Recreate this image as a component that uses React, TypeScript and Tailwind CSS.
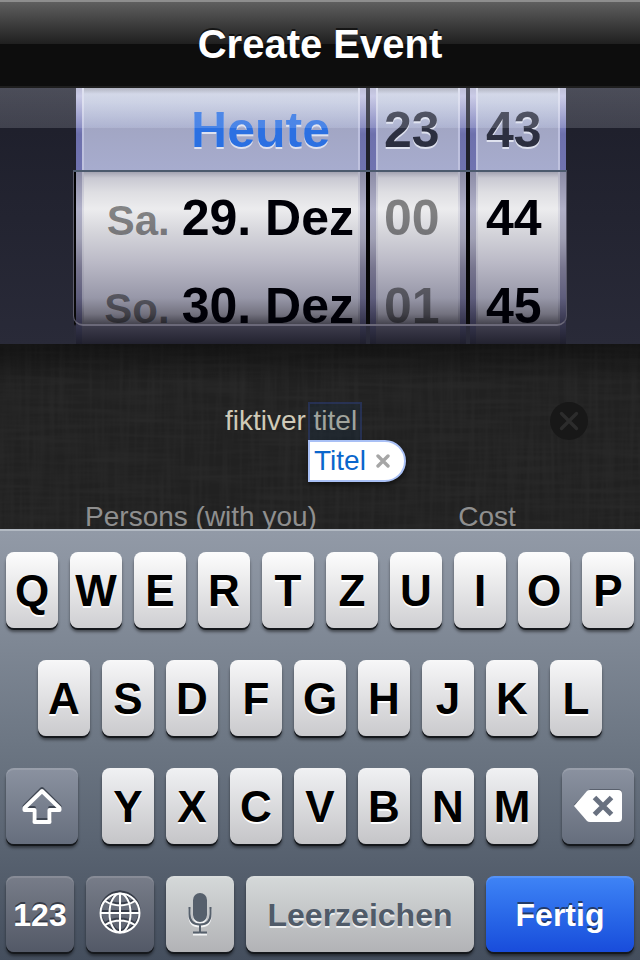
import type { ReactNode } from "react";

type Row = { day?: string; text: string; tone?: string };

function Wheel({ label, rows, className, listClass }: { label: string; rows: Row[]; className: string; listClass: string }) {
  const edge =
    "w-[6px] shrink-0 bg-[linear-gradient(180deg,#b0b0cc_0px,#c0c0e0_8px,#7c7fba_38px,#6d70ac_46px,#7073b0_82px,#8c8ca6_84px,#b0b0c8_121px,#a0a0b4_150px,#77758e_180px,#5e5d7c_210px,#33324a_236px,#33334a_238px,#1f1f2d_256px)]";
  const shine =
    "w-[2px] shrink-0 bg-[linear-gradient(180deg,#d9dbec_0px,#d9dbec_14px,#bdc0de_40px,#bfc2de_82px,#b4b4c4_84px,#dcdce4_121px,#c6c6d0_150px,#aaa9b8_180px,#8f8fa2_210px,#45444f_236px,#3d3c4c_238px,#22222f_256px)]";
  return (
    <div className={"flex h-full " + className}>
      <div className={edge} />
      <div className={shine} />
      <ul
        role="listbox"
        aria-label={label}
        className={
          "flex min-w-0 flex-1 flex-col overflow-hidden bg-[linear-gradient(180deg,#a0a2b0_0px,#cbd0e2_6px,#c4cadf_14px,#a2a8c9_39px,#a2a6c4_40px,#a7acce_82px,#a4a4b2_84px,#c9c9d2_90px,#dedee2_104px,#ececee_121px,#d4d4da_145px,#bab9c6_175px,#9797a8_210px,#73727f_226px,#45444f_236px,#3d3c4c_238px,#22222f_256px)] text-[50px] leading-none font-bold whitespace-nowrap " +
          listClass
        }
      >
        {rows.map((r, i) => (
          <li
            key={r.text}
            role="option"
            aria-selected={i === 0}
            className={
              "flex shrink-0 items-center " +
              (i === 0 ? "h-[86px] pb-[2px] [text-shadow:0_2px_0_#dfe2ef] " : "h-[88px] ") +
              (r.tone ?? "text-[#000007]")
            }
          >
            <span className="flex items-baseline gap-3">
              {r.day && <span className="text-[42px] leading-none text-[#000000]/45">{r.day}</span>}
              <span>{r.text}</span>
            </span>
          </li>
        ))}
      </ul>
      <div className={shine} />
      <div className={edge} />
    </div>
  );
}

const KEY =
  "flex h-[76px] items-center justify-center rounded-lg font-bold leading-none shadow-[inset_0_2px_0_rgba(255,255,255,0.12),0_2px_0_#15181c,0_4px_3px_rgba(0,0,0,0.45)] ";

const DARK_TEXT = "text-white [text-shadow:0_-2px_0_rgba(30,35,45,0.7)] ";

function Key({ label, className, children }: { label?: string; className: string; children: ReactNode }) {
  return (
    <button type="button" aria-label={label} className={KEY + className}>
      {children}
    </button>
  );
}

function Letters({ letters, className }: { letters: string; className: string }) {
  return (
    <>
      {letters.split("").map((l) => (
        <Key
          key={l}
          className={"min-w-0 flex-1 bg-linear-to-b pt-[2px] text-[44px] text-black [text-shadow:0_2px_0_#ffffff] " + className}
        >
          {l}
        </Key>
      ))}
    </>
  );
}

function ShiftIcon() {
  return (
    <svg width="44" height="40" viewBox="0 0 44 40" fill="none" strokeLinejoin="round" aria-hidden="true">
      <path d="M22 3 L39.5 20.5 V22 H30 V34 H14 V22 H4.5 V20.5 Z" stroke="#3f4652" strokeWidth="4" />
      <path d="M22 5 L39.5 22 V24 H29.5 V36 H14.5 V24 H4.5 V22 Z" stroke="#fff" strokeWidth="4" />
    </svg>
  );
}

function BackspaceIcon() {
  return (
    <svg width="50" height="36" viewBox="0 0 50 36" aria-hidden="true">
      <path d="M17 1 H45 Q49 1 49 5 V28 Q49 32 45 32 H17 L1 16.5 Z" fill="#3f4652" opacity="0.6" />
      <path d="M17 2 H45 Q49 2 49 6 V30 Q49 34 45 34 H17 Q15 34 14 33 L1 18 L14 3 Q15 2 17 2 Z" fill="#fff" />
      <path d="M21.5 9.5 L38.5 26.5 M38.5 9.5 L21.5 26.5" stroke="#697180" strokeWidth="5" />
    </svg>
  );
}

function GlobeLines({ color }: { color: string }) {
  return (
    <g stroke={color} strokeWidth="2" fill="none">
      <circle cx="22" cy="21" r="19.5" />
      <ellipse cx="22" cy="21" rx="10.5" ry="19.5" />
      <path d="M22 1.5 V40.5 M2.5 21 H41.5 M7 9 Q22 18 37 9 M7 33 Q22 24 37 33" />
    </g>
  );
}

function GlobeIcon() {
  return (
    <svg width="44" height="44" viewBox="0 0 44 44" aria-hidden="true" overflow="visible">
      <g transform="translate(0 -2)">
        <GlobeLines color="#363c48" />
      </g>
      <GlobeLines color="#ffffff" />
    </svg>
  );
}

function MicShape({ color }: { color: string }) {
  return (
    <g>
      <rect x="6" y="1" width="14" height="29" rx="7" fill={color} />
      <path d="M2.5 15 V22 Q2.5 32.5 13 32.5 Q23.5 32.5 23.5 22 V15 M13 33 V40 M6 40.5 H20" fill="none" stroke={color} strokeWidth="2" />
    </g>
  );
}

function MicIcon() {
  return (
    <svg width="26" height="44" viewBox="0 0 26 44" aria-hidden="true">
      <g transform="translate(0 2)">
        <MicShape color="#f4f5f6" />
      </g>
      <MicShape color="#56606c" />
    </svg>
  );
}

function Linen() {
  return (
    <svg className="absolute inset-0 h-full w-full opacity-[0.035]" aria-hidden="true">
      <filter id="weft">
        <feTurbulence type="fractalNoise" baseFrequency="0.012 0.2" numOctaves="2" seed="4" />
        <feColorMatrix values="0 0 0 0 1  0 0 0 0 1  0 0 0 0 1  1.6 0 0 0 -0.6" />
      </filter>
      <filter id="warp">
        <feTurbulence type="fractalNoise" baseFrequency="0.2 0.012" numOctaves="2" seed="9" />
        <feColorMatrix values="0 0 0 0 1  0 0 0 0 1  0 0 0 0 1  1.6 0 0 0 -0.6" />
      </filter>
      <rect width="100%" height="100%" filter="url(#weft)" />
      <rect width="100%" height="100%" filter="url(#warp)" />
    </svg>
  );
}

export default function App() {
  return (
    <div className="flex min-h-screen flex-col bg-[#232323] font-['Liberation_Sans',Arial,sans-serif]">
      <header className="flex h-[88px] items-center justify-center border-t-2 border-b-2 border-t-[#8e8e8e] border-b-[#1e1e1e] bg-[linear-gradient(180deg,#5f5f5f_0%,#1f1f1f_50%,#0d0d0d_50%,#0d0d0d_100%)]">
        <h1 className="text-[40px] leading-none font-bold text-white [text-shadow:0_-2px_0_rgba(0,0,0,0.6)]">Create Event</h1>
      </header>

      <section aria-label="Date" className="relative h-[256px] bg-linear-to-b from-[#1d1e2a] to-[#292a38]">
        <div className="mx-[74px] flex h-full gap-1 bg-[linear-gradient(180deg,#1f202c_0px,#1f202c_82px,#000_84px,#0a0a0a_236px,#2b2b3a_238px,#292a38_256px)] pl-[2px]">
          <Wheel
            label="Day"
            className="min-w-0 flex-1"
            listClass="items-end pr-1"
            rows={[
              { text: "Heute", tone: "text-[#2b70e2] pr-6" },
              { day: "Sa.", text: "29. Dez" },
              { day: "So.", text: "30. Dez" },
            ]}
          />
          <Wheel
            label="Hour"
            className="w-24"
            listClass="pl-[6px]"
            rows={[
              { text: "23", tone: "text-[#2c2f40]" },
              { text: "00", tone: "text-[#000000]/45" },
              { text: "01", tone: "text-[#000000]/45" },
            ]}
          />
          <Wheel
            label="Minute"
            className="w-24"
            listClass="pl-2"
            rows={[{ text: "43", tone: "text-[#2c2f40]" }, { text: "44" }, { text: "45" }]}
          />
        </div>
        <div className="pointer-events-none absolute inset-x-0 top-0 h-10 bg-linear-to-b from-[#f0f4ff]/22 to-[#f0f4ff]/16" />
        <div className="pointer-events-none absolute inset-x-[73px] top-[82px] h-[156px] rounded-b-[10px] border-x border-t-2 border-b-2 border-x-[#5d5c6c] border-t-[#4c5a6d] border-b-[#6b6979]" />
      </section>

      <form className="relative h-[185px] overflow-hidden bg-[#212121]">
        <Linen />
        <div className="absolute inset-x-0 top-0 h-10 bg-linear-to-b from-black/45 to-transparent" />
        <div className="relative flex items-center pt-[58px] pr-[52px] pl-8">
          <div className="relative min-w-0 flex-1">
            <input
              aria-label="Title"
              defaultValue="fiktiver titel"
              className="block h-[38px] w-full bg-transparent text-center text-[28px] text-[#cfcab8] outline-none"
            />
            <div className="pointer-events-none absolute top-0 left-1/2 ml-[17px] h-10 w-[54px] border-2 border-[#2e3c78]/50 bg-[#16324e]/25" />
            <button
              type="button"
              aria-label="Dismiss suggestion Titel"
              className="absolute top-[38px] left-1/2 z-10 ml-[17px] flex h-[42px] w-[98px] items-center gap-[10px] rounded-r-full border-2 border-[#a9c0f5] bg-white pl-1 text-[28px] leading-none text-[#0a66cc] shadow-[0_3px_5px_rgba(0,0,0,0.5)]"
            >
              Titel
              <svg width="14" height="14" viewBox="0 0 14 14" aria-hidden="true">
                <path d="M2 2 L12 12 M12 2 L2 12" stroke="#a6a6a6" strokeWidth="3.4" strokeLinecap="round" />
              </svg>
            </button>
          </div>
          <button type="button" aria-label="Clear title" className="flex size-[38px] items-center justify-center rounded-full bg-[#181818]">
            <svg width="20" height="20" viewBox="0 0 20 20" aria-hidden="true">
              <path d="M2.5 2.5 L17.5 17.5 M17.5 2.5 L2.5 17.5" stroke="#2c2c2c" strokeWidth="3.4" strokeLinecap="round" />
            </svg>
          </button>
        </div>
        <div className="relative mt-[58px] grid grid-cols-[338fr_234fr] pr-9 pl-8">
          <input
            aria-label="Persons"
            placeholder="Persons (with you)"
            className="h-[38px] w-full min-w-0 bg-transparent text-center text-[28px] outline-none placeholder:text-[#8f8f8f]"
          />
          <input
            aria-label="Cost"
            placeholder="Cost"
            className="h-[38px] w-full min-w-0 bg-transparent text-center text-[28px] outline-none placeholder:text-[#8f8f8f]"
          />
        </div>
      </form>

      <section
        aria-label="Keyboard"
        className="flex flex-1 flex-col gap-8 border-t-2 border-[#b3bac3] bg-[linear-gradient(180deg,#929aa7_0%,#6c7683_50%,#444e5d_100%)] px-[6px] pt-[21px] pb-2"
      >
        <div className="flex gap-3">
          <Letters letters="QWERTZUIOP" className="from-[#fdfdfd] to-[#cfcfd2]" />
        </div>
        <div className="flex gap-3 px-8">
          <Letters letters="ASDFGHJKL" className="from-[#f7f7f8] to-[#cacacd]" />
        </div>
        <div className="flex gap-6">
          <Key label="Shift" className="w-[72px] bg-linear-to-b from-[#8b92a0] to-[#666e7d]">
            <ShiftIcon />
          </Key>
          <div className="flex min-w-0 flex-1 gap-3">
            <Letters letters="YXCVBNM" className="from-[#f0f1f3] to-[#c5c5c8]" />
          </div>
          <Key label="Backspace" className="w-[72px] bg-linear-to-b from-[#8b92a0] to-[#666e7d]">
            <BackspaceIcon />
          </Key>
        </div>
        <div className="flex gap-3">
          <Key className={"w-[68px] bg-linear-to-b from-[#787d89] to-[#535967] pt-[2px] text-[32px] " + DARK_TEXT}>123</Key>
          <Key label="Next keyboard" className="w-[68px] bg-linear-to-b from-[#787d89] to-[#535967]">
            <GlobeIcon />
          </Key>
          <Key label="Dictate" className="w-[68px] bg-linear-to-b from-[#d5d9d9] to-[#b2b3b6]">
            <MicIcon />
          </Key>
          <Key className="min-w-0 flex-1 bg-linear-to-b from-[#d5d9d9] to-[#b2b3b6] pt-[2px] text-[32px] text-[#505b69] [text-shadow:0_2px_0_#eef0f1]">
            Leerzeichen
          </Key>
          <Key className={"w-[148px] bg-linear-to-b from-[#3f84f6] to-[#194cdb] pt-[2px] text-[32px] " + DARK_TEXT}>Fertig</Key>
        </div>
      </section>
    </div>
  );
}
